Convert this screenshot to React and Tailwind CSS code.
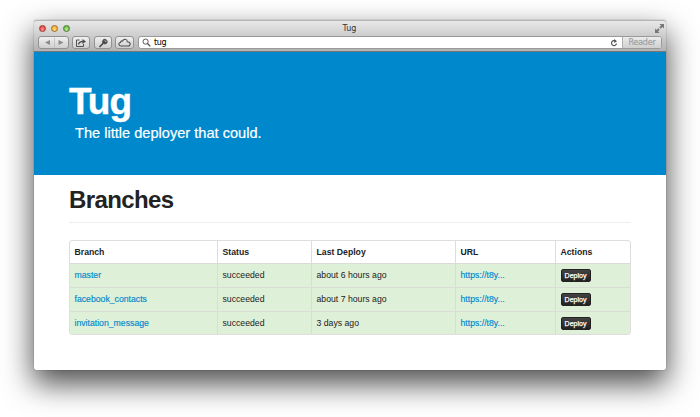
const branches = [
  { name: 'master', status: 'succeeded', time: 'about 6 hours ago' },
  { name: 'facebook_contacts', status: 'succeeded', time: 'about 7 hours ago' },
  { name: 'invitation_message', status: 'succeeded', time: '3 days ago' },
];

const toolButton =
  'flex h-[13px] items-center justify-center rounded-[3px] border border-[#929292] bg-linear-to-b from-[#f0f0f0] to-[#cfcfcf]';

function TrafficLights() {
  return (
    <div className="flex gap-[5px]">
      <span className="size-[7px] rounded-full border border-[#a8302c] bg-radial-[at_50%_75%] from-[#ff9a94] to-[#df2a28]" />
      <span className="size-[7px] rounded-full border border-[#a86a22] bg-radial-[at_50%_75%] from-[#ffe07c] to-[#ec9a24]" />
      <span className="size-[7px] rounded-full border border-[#477d30] bg-radial-[at_50%_75%] from-[#bdf08e] to-[#55a838]" />
    </div>
  );
}

function TitleBar() {
  return (
    <div className="grid h-[15px] grid-cols-[1fr_auto_1fr] items-center pl-[5px] pr-[2px]">
      <TrafficLights />
      <span className="relative -left-[2px] text-[8px] leading-[15px] text-[#333]">Tug</span>
      <svg className="justify-self-end" width="9" height="9" viewBox="0 0 9 9" fill="#777">
        <path d="M4.500 0H9v4.500L7.500 3 5.800 4.700 4.300 3.200 6 1.500zM0 4.500 1.500 6 3.200 4.300 4.700 5.800 3 7.500 4.500 9H0z" />
      </svg>
    </div>
  );
}

function Toolbar() {
  return (
    <div className="flex h-[13px] pl-1 pr-1">
      <div className={`${toolButton} w-[31px]`}>
        <svg width="28" height="11" viewBox="0 0 28 11">
          <path d="M10 3v5L5 5.500zM18.500 3v5l5-2.500z" fill="#8b8b8b" />
          <path d="M14.500 0.500v10" stroke="#bbb" strokeWidth="0.8" />
        </svg>
      </div>
      <div className={`${toolButton} ml-[3px] w-[18px]`}>
        <svg width="12" height="10" viewBox="0 0 12 10" fill="none" stroke="#505050">
          <path d="M4.500 2H1.500v6.500h7V6" />
          <path d="M3.500 6.500c.3-2 1.700-3 4.500-3" strokeWidth="1.300" />
          <path d="M7.500 1v5L11 3.500z" fill="#505050" stroke="none" />
        </svg>
      </div>
      <div className={`${toolButton} ml-1 w-[18px]`}>
        <svg width="11" height="10" viewBox="0 0 11 10" fill="none" stroke="#4c4c4c">
          <path d="M1.500 9 5.500 5" strokeWidth="1.700" />
          <path d="M4.300 3.200 5.600 1.200 7.500 1 9.500 3.200 9 5.200 7 6.200 4.600 5z" fill="#4c4c4c" strokeWidth="0.500" />
          <path d="M6.800 2.400 8.300 4" stroke="#ddd" strokeWidth="0.900" />
        </svg>
      </div>
      <div className={`${toolButton} ml-[3px] w-[19px]`}>
        <svg width="13" height="9" viewBox="0 0 13 9" fill="none" stroke="#505050" strokeWidth="1.100">
          <path d="M3 8C.2 8 .2 4.600 2.600 4.500 2.500 3 4 2.600 4.600 3.100 5.500.300 9.300.700 9.300 3.700 13 3.700 13 8 10.200 8z" />
        </svg>
      </div>
      <div className="ml-1 flex flex-1 rounded-[3px] border border-[#999] bg-white">
        <div className="flex flex-1 items-center pl-[3px] pr-1">
          <svg width="9" height="9" viewBox="0 0 9 9" fill="none" stroke="#555">
            <circle cx="3.600" cy="3.600" r="2.600" />
            <path d="m5.500 5.500 2.700 2.700" strokeWidth="1.300" />
          </svg>
          <span className="ml-[3px] flex-1 text-[8px] leading-[11px] tracking-[-0.400px] text-black">tug</span>
          <svg width="8" height="8" viewBox="0 0 8 8" fill="none" stroke="#555" strokeWidth="1.200">
            <path d="M5.500 2.100A2.500 2.500 0 1 0 6.500 4.500" />
            <path d="M4.200 0v4L7 2.200z" fill="#555" stroke="none" />
          </svg>
        </div>
        <div className="w-[39px] rounded-r-[2px] border-l border-[#b0b0b0] bg-linear-to-b from-[#ebebeb] to-[#d0d0d0] text-center text-[8px] leading-[11px] tracking-[-0.200px] text-[#a0a0a0] [-webkit-text-stroke:0.200px_#a0a0a0]">
          Reader
        </div>
      </div>
    </div>
  );
}

function BranchTable() {
  const link = 'text-[#0088cc] [-webkit-text-stroke:0.150px_#0088cc]';
  const row = 'grid grid-cols-[148px_94px_144px_100px_1fr]';
  return (
    <div className="mt-[17px] h-[95px] overflow-hidden rounded-[3px] border border-[#dddddd] text-[8.700px] text-[#222]">
      <div className={`${row} h-[22px] divide-x divide-[#dddddd] font-bold leading-[22px] text-[#222] *:pl-[4.500px]`}>
        <div>Branch</div>
        <div>Status</div>
        <div>Last Deploy</div>
        <div>URL</div>
        <div>Actions</div>
      </div>
      {branches.map((b) => (
        <div
          key={b.name}
          className={`${row} h-[24px] divide-x divide-[#d8ddd5] border-t border-[#d8ddd5] bg-[#dff0d8] leading-[23px] *:pl-[4.500px]`}
        >
          <div className={link}>{b.name}</div>
          <div>{b.status}</div>
          <div>{b.time}</div>
          <div className={link}>https://t8y...</div>
          <div className="flex items-center">
            <button className="h-[13px] w-[30px] rounded-[2px] border border-[#222] bg-linear-to-b from-[#444] to-[#222] text-center text-[7px] leading-[11px] text-white [-webkit-text-stroke:0.250px_white]">
              Deploy
            </button>
          </div>
        </div>
      ))}
    </div>
  );
}

export default function App() {
  return (
    <div className="h-[417px] w-[700px] overflow-hidden bg-white pl-[34px] pt-[20px] font-['Helvetica_Neue','Liberation_Sans',sans-serif]">
      <div className="h-[350px] w-[632px] rounded-t-[3px] rounded-b-[2px] bg-white shadow-[0_0_1px_rgba(0,0,0,0.7),0_13px_30px_1px_rgba(0,0,0,0.7)]">
        <header className="h-[32px] rounded-t-[3px] border-t border-b border-t-[#b5b5b5] border-b-[#777] bg-linear-to-b from-[#e8e8e8] to-[#b2b2b2] font-['Lucida_Grande','DejaVu_Sans',sans-serif]">
          <TitleBar />
          <Toolbar />
        </header>
        <section className="h-[123px] bg-[#0088cc] pl-[35px] pt-[30px] text-white">
          <h1 className="text-[37px] font-bold leading-[40px] tracking-[-1px] [-webkit-text-stroke:0.400px_white]">Tug</h1>
          <p className="pl-[6px] text-[14.600px] leading-[22px] [-webkit-text-stroke:0.200px_white]">The little deployer that could.</p>
        </section>
        <main className="px-[35px]">
          <h2 className="h-[48px] border-b border-[#eee] text-[24px] font-bold leading-[50px] tracking-[-0.600px] text-[#222]">
            Branches
          </h2>
          <BranchTable />
        </main>
      </div>
    </div>
  );
}
